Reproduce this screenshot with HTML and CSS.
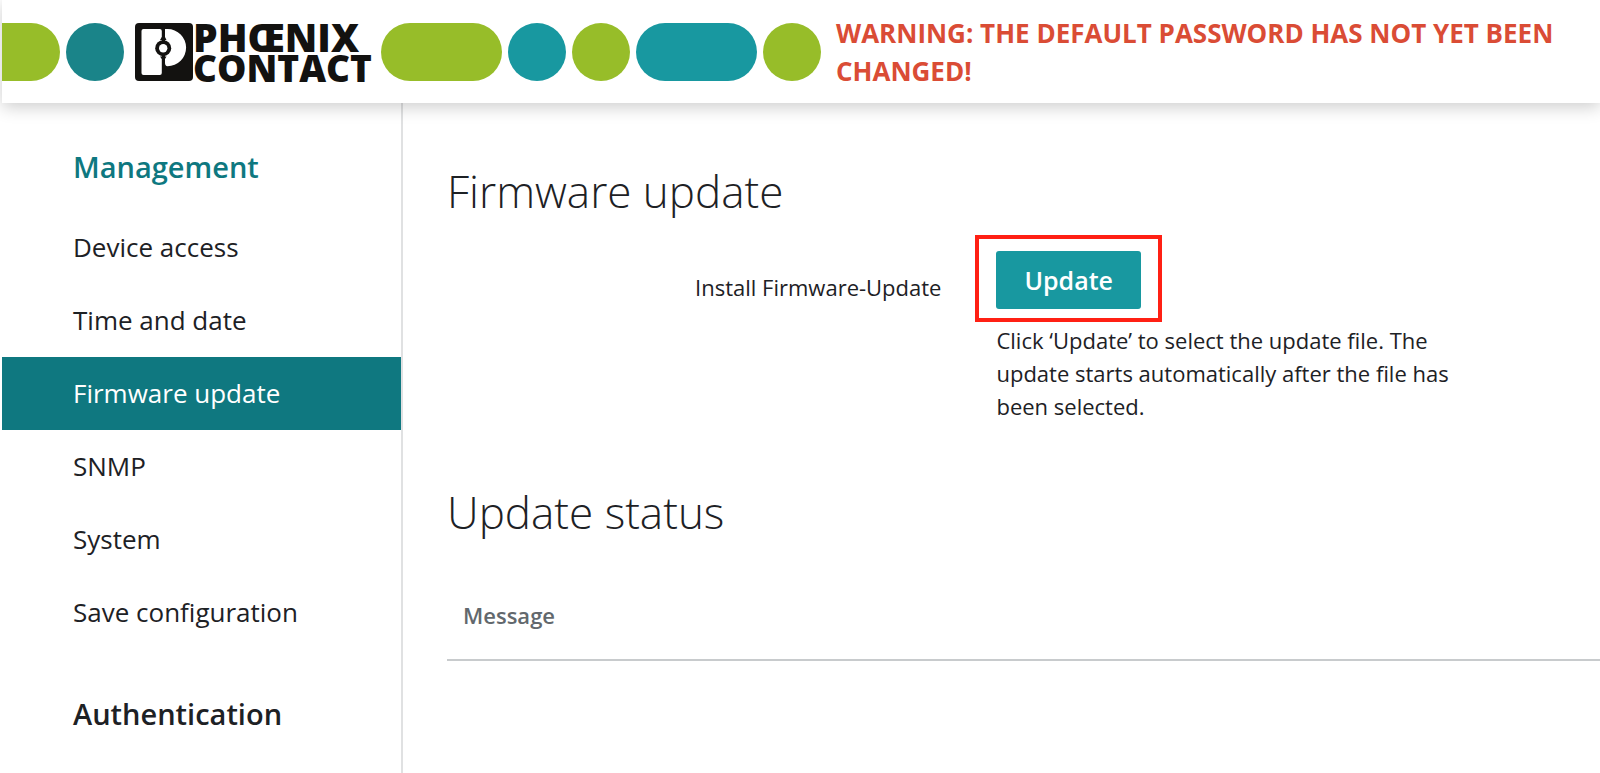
FILE: index.html
```html
<!DOCTYPE html>
<html lang="en">
  <head>
    <meta charset="UTF-8" />
    <meta name="viewport" content="width=device-width, initial-scale=1.0" />
    <title>Firmware update</title>
    <link rel="stylesheet" href="styles.css">
  </head>
  <body>
    <header>
      <div class="brand">
        <span class="shape tab green"></span>
        <span class="shape circle dark-teal"></span>
        <div class="logo">
          <svg class="logo-icon" viewBox="0 0 58 58" aria-hidden="true">
            <rect width="58" height="58" rx="4" fill="#131210" />
            <rect x="6.500" y="6" width="20.300" height="46" rx="2" fill="#fff" />
            <path d="M30 6H32.500A18.600 18.600 0 0 1 32.500 43.200Q30 43 30 40Z" fill="#fff" />
            <circle cx="28.200" cy="25.200" r="8" fill="#131210" />
            <path d="M25 17L26.800 14H30L31.500 17ZM25 33.500L26.800 36H30L31.500 33.500Z" fill="#131210" />
            <circle cx="28.200" cy="25.200" r="4.200" fill="#fff" />
          </svg>
          <div class="logo-text">
            <span class="phoenix">PHŒNIX</span>
            <span class="contact">CONTACT</span>
          </div>
        </div>
        <span class="shape pill green"></span>
        <span class="shape circle teal"></span>
        <span class="shape circle green"></span>
        <span class="shape pill teal"></span>
        <span class="shape circle green"></span>
      </div>
      <p class="warning">WARNING: THE DEFAULT PASSWORD HAS NOT YET BEEN CHANGED!</p>
    </header>

    <div class="page">
      <nav>
        <h2 class="current">Management</h2>
        <ul>
          <li><a href="#">Device access</a></li>
          <li><a href="#">Time and date</a></li>
          <li><a href="#" class="active">Firmware update</a></li>
          <li><a href="#">SNMP</a></li>
          <li><a href="#">System</a></li>
          <li><a href="#">Save configuration</a></li>
        </ul>
        <h2>Authentication</h2>
      </nav>

      <main>
        <h1>Firmware update</h1>
        <div class="form-row">
          <label for="update">Install Firmware-Update</label>
          <div class="field">
            <div class="highlight">
              <button type="button" id="update">Update</button>
            </div>
            <p class="help">Click ‘Update’ to select the update file. The update starts automatically after the file has been selected.</p>
          </div>
        </div>

        <h1>Update status</h1>
        <table>
          <thead>
            <tr>
              <th>Message</th>
            </tr>
          </thead>
        </table>
      </main>
    </div>
  </body>
</html>
```
FILE: styles.css
```css
* {
  box-sizing: border-box;
}

body {
  margin: 0;
  padding-left: 2px;
  min-height: 100vh;
  display: flex;
  flex-direction: column;
  font-family: "Open Sans", sans-serif;
  color: #1d2125;
  background-color: #fff;
}

header {
  position: relative;
  display: flex;
  align-items: center;
  gap: 15px;
  min-height: 103px;
  background-color: #fff;
  box-shadow: 0 4px 16px rgba(0, 0, 0, 0.2);
}

.brand {
  display: flex;
  flex-shrink: 0;
  align-items: center;
  gap: 6px;
}

.shape {
  height: 58px;
  border-radius: 29px;
}

.circle {
  width: 58px;
}

.pill {
  width: 121px;
}

.tab {
  width: 58px;
  border-radius: 0 29px 29px 0;
}

.green {
  background-color: #97bd29;
}

.teal {
  background-color: #1898a0;
}

.dark-teal {
  background-color: #1a8489;
}

.logo {
  display: flex;
  align-items: center;
  width: 240px;
  margin-left: 5px;
}

.logo-icon {
  width: 58px;
  height: 58px;
  flex-shrink: 0;
}

.logo-text {
  display: flex;
  flex-direction: column;
  font-weight: 800;
  line-height: 31px;
  color: #131210;
}

.phoenix {
  font-size: 39px;
}

.contact {
  font-size: 37px;
}

.warning {
  margin: 0;
  font-size: 26px;
  font-weight: 700;
  line-height: 38px;
  color: #da4c35;
}

.page {
  display: flex;
  flex: 1;
}

nav {
  width: 401px;
  flex-shrink: 0;
  padding-top: 44px;
  border-right: 2px solid #e0e1e2;
}

nav h2 {
  margin: 0;
  padding-left: 71px;
  font-size: 29px;
  font-weight: 600;
  line-height: 40px;
}

nav h2.current {
  color: #0e7880;
}

nav ul {
  margin: 24px 0 45px;
  padding: 0;
  list-style: none;
}

nav a {
  display: block;
  padding-left: 71px;
  font-size: 26px;
  line-height: 73px;
  color: inherit;
  text-decoration: none;
}

nav a.active {
  color: #fff;
  background-color: #0f7880;
}

main {
  flex: 1;
  padding: 58px 0 0 44px;
}

h1 {
  margin: 0;
  font-size: 44px;
  font-weight: 300;
  line-height: 60px;
}

.form-row {
  display: grid;
  grid-template-columns: 11fr 13fr;
  margin: 14px 0 59px;
}

.form-row label {
  padding: 36px 34px 0 0;
  font-size: 22px;
  line-height: 32px;
  text-align: right;
}

.highlight {
  width: fit-content;
  padding: 12px 17px 9px;
  border: 4px solid #ff2014;
}

button {
  display: block;
  height: 58px;
  padding: 0 28px;
  font-family: inherit;
  font-size: 25px;
  font-weight: 600;
  color: #fff;
  background-color: #1898a0;
  border: none;
  border-radius: 3px;
  cursor: pointer;
}

.help {
  max-width: 500px;
  margin: 2px 0 0;
  padding-left: 21px;
  font-size: 22px;
  line-height: 33px;
}

table {
  width: 100%;
  margin-top: 29px;
  border-collapse: collapse;
}

th {
  padding: 28px 16px;
  font-size: 22px;
  font-weight: 600;
  line-height: 32px;
  text-align: left;
  color: #62686d;
  border-bottom: 2px solid #c8cbcd;
}
```
